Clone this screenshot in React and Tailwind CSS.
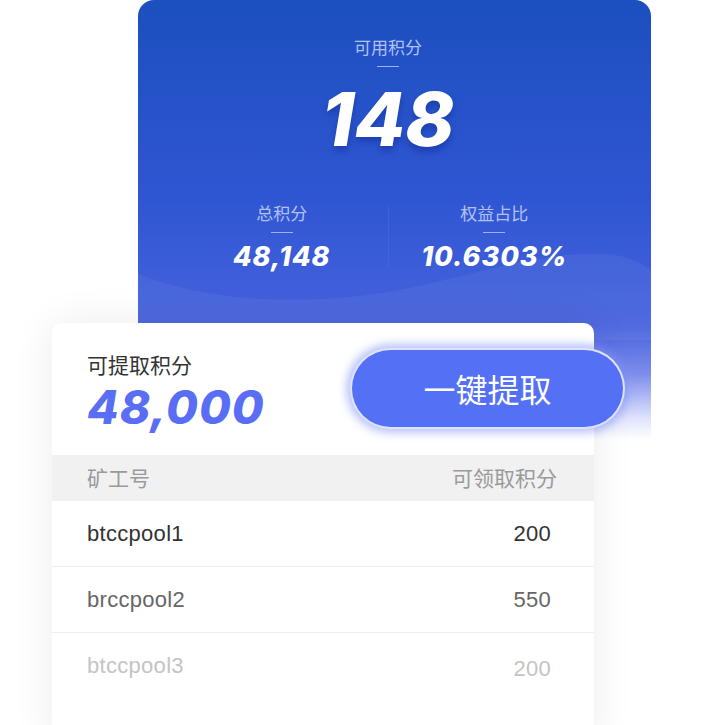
import React from 'react';

const rows = [
    { name: 'btccpool1', points: '200', tone: 'text-[#333333]' },
    { name: 'brccpool2', points: '550', tone: 'text-[#666666]' },
    { name: 'btccpool3', points: '200', tone: 'text-[#c4c4c4]', shift: true },
];

const cjk = "font-['Noto_Sans_CJK_SC',sans-serif]";
const num = "font-['Inter',sans-serif] italic font-extrabold";

function StatBlock({ label, value }) {
    return (
        <div className="flex-1 flex flex-col items-center">
            <div className={`${cjk} text-[17px] leading-[22px] text-[#b3c1f2]`}>{label}</div>
            <div className="mt-[8px] h-px w-[22px] bg-[#9fb2f0]" />
            <div className={`${num} mt-[9px] text-[27px] leading-[30px] text-white tracking-[1px]`}>{value}</div>
        </div>
    );
}

export default function App() {
    return (
        <div className="w-[728px] h-[725px] overflow-hidden bg-white">
            {/* Blue summary card */}
            <div className="relative ml-[138px] w-[513px] h-[440px] rounded-t-[16px] overflow-hidden bg-[linear-gradient(180deg,#1c4fbf_0%,#2f56d2_45%,#4762de_74%,#7d8deb_85%,#dfe3fb_95%,#ffffff_100%)]">
                <svg className="absolute left-0 top-[240px]" width="513" height="100" viewBox="0 0 513 100">
                    <path d="M0 34 C 60 58, 150 68, 250 52 C 330 38, 400 10, 470 14 C 490 16, 505 24, 513 30 L 513 100 L 0 100 Z" fill="rgba(255,255,255,0.05)" />
                </svg>
                <div className="relative flex flex-col items-center pl-[38px] pr-[51px] pt-[36px]">
                    <div className={`${cjk} text-[17px] leading-[22px] text-[#b3c1f2]`}>可用积分</div>
                    <div className="mt-[8px] h-px w-[22px] bg-[#9fb2f0]" />
                    <div className={`${num} mt-[12px] text-[74px] leading-[80px] text-white [text-shadow:0_5px_6px_rgba(10,30,130,0.35)]`}>148</div>
                    <div className="mt-[43px] flex w-full items-stretch">
                        <StatBlock label="总积分" value="48,148" />
                        <div className="w-px bg-[#4a6ad8]/60 my-[4px]" />
                        <StatBlock label="权益占比" value="10.6303%" />
                    </div>
                </div>
            </div>

            {/* White withdraw card */}
            <div className="relative -mt-[117px] ml-[52px] w-[542px] h-[420px] rounded-t-[10px] bg-white shadow-[0_0_40px_rgba(0,0,0,0.08)]">
                <div className="flex items-center justify-between pl-[35px] -mr-[31px] h-[132px]">
                    <div className="flex flex-col pt-[4px]">
                        <div className={`${cjk} text-[21px] leading-[26px] text-[#333333]`}>可提取积分</div>
                        <div className={`${num} mt-[6px] text-[46px] leading-[48px] text-[#5a6ef5] tracking-[1px]`}>48,000</div>
                    </div>
                    <button className={`${cjk} mt-[-2px] w-[275px] h-[81px] rounded-full bg-[#5470f5] text-white text-[32px] border-2 border-white/80 shadow-[0_0_9px_4px_rgba(130,145,250,0.55)]`}>
                        一键提取
                    </button>
                </div>
                <div className={`${cjk} flex items-center justify-between h-[46px] bg-[#f1f1f1] pl-[35px] pr-[37px] text-[21px] text-[#9a9a9a]`}>
                    <span>矿工号</span>
                    <span>可领取积分</span>
                </div>
                {rows.map((r, i) => (
                    <div
                        key={r.name}
                        className={`flex justify-between h-[66px] pl-[35px] pr-[43px] font-['Liberation_Sans',sans-serif] text-[22px] tracking-[0.3px] ${r.tone} ${i < 2 ? 'border-b border-[#eeeeee] items-center' : 'items-start pt-[16px]'}`}
                    >
                        <span>{r.name}</span>
                        <span className={r.shift ? 'mt-[3px]' : ''}>{r.points}</span>
                    </div>
                ))}
            </div>
        </div>
    );
}
